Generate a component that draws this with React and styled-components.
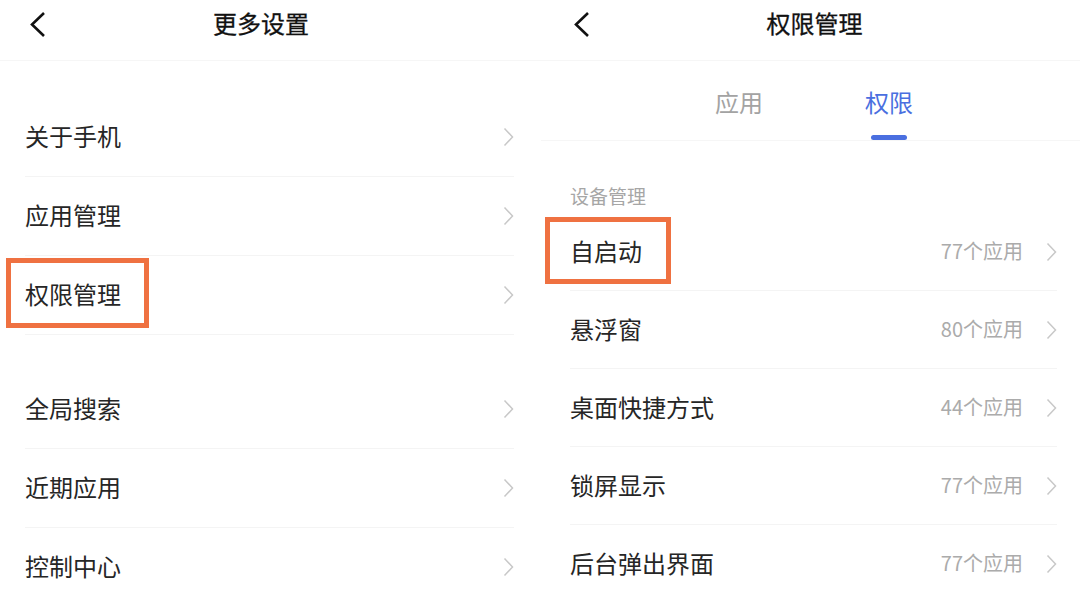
import React from "react";
import styled, {createGlobalStyle} from "styled-components";

const GlobalStyle = createGlobalStyle`
  html, body {
    margin: 0;
    padding: 0;
    background: #fff;
  }
  body {
    font-family: "Noto Sans CJK SC", "Noto Sans", sans-serif;
    color: #1f1f1f;
  }
`;

const Page = styled.div`
  display: grid;
  grid-template-columns: 541px 539px;
  width: 1080px;
  height: 597px;
  overflow: hidden;
  background: #fff;
`;

const Panel = styled.div`
  display: flex;
  flex-direction: column;
  min-width: 0;
`;

const Header = styled.div`
  box-sizing: border-box;
  display: grid;
  grid-template-columns: ${p => p.$left}px 1fr ${p => p.$right}px;
  align-items: start;
  height: 61px;
  padding-top: 9px;
  border-bottom: 1px solid #f6f6f6;
`;

const Back = styled.div`
  display: flex;
  align-items: center;
  height: 28px;
  padding: 1px 0 0 ${p => p.$pad}px;
`;

const Title = styled.div`
  text-align: center;
  font-size: 24px;
  line-height: 28px;
  font-weight: 400;
  color: #111;
  -webkit-text-stroke: 0.3px #111;
`;

const Group = styled.div`
  display: flex;
  flex-direction: column;
  margin-top: ${p => p.$top}px;
`;

const Row = styled.div`
  box-sizing: border-box;
  display: flex;
  align-items: center;
  height: ${p => p.$h}px;
  margin: 0 ${p => p.$right}px 0 ${p => p.$left}px;
  border-bottom: 1px solid #f4f4f4;
`;

const Label = styled.div`
  position: relative;
  align-self: stretch;
  display: flex;
  align-items: center;
  padding-bottom: 3px;
  font-size: 24px;
  color: #262626;
  &::after {
    content: "";
    display: ${p => (p.$mark ? "block" : "none")};
    position: absolute;
    box-sizing: border-box;
    top: ${p => p.$mark?.[0]}px;
    right: ${p => p.$mark?.[1]}px;
    bottom: ${p => p.$mark?.[2]}px;
    left: ${p => p.$mark?.[3]}px;
    border: 5px solid #ef7141;
  }
`;

const Value = styled.span`
  margin-left: auto;
  margin-right: 23px;
  padding-bottom: 2px;
  font-size: 20px;
  color: #ababab;
`;

const Spacer = styled.span`
  margin-left: auto;
`;

const TabBar = styled.div`
  box-sizing: border-box;
  display: flex;
  justify-content: center;
  gap: 102px;
  height: 80px;
  padding: 25px 0 0 7px;
  border-bottom: 1px solid #f6f6f6;
`;

const Tab = styled.div`
  display: flex;
  flex-direction: column;
  align-items: center;
  font-size: 24px;
  line-height: 32px;
  color: ${p => (p.$active ? "#4a6fe0" : "#a3a3a3")};
  &::after {
    content: "";
    width: 36px;
    height: 5px;
    margin-top: 17px;
    border-radius: 3px;
    background: ${p => (p.$active ? "#4a6fe0" : "transparent")};
  }
`;

const Section = styled.div`
  padding: 41px 0 0 29px;
  font-size: 19px;
  line-height: 28px;
  color: #a6a6a6;
`;

const BackIcon = () => (
  <svg width="17" height="27" viewBox="0 0 17 27">
    <polyline points="15,2 3,13.5 15,25" fill="none" stroke="#111" strokeWidth="2.6" strokeLinejoin="miter" />
  </svg>
);

const Chevron = () => (
  <svg width="11" height="20" viewBox="0 0 11 20">
    <polyline points="1.5,1.5 9.5,10 1.5,18.5" fill="none" stroke="#c8c8c8" strokeWidth="1.5" />
  </svg>
);

const moreGroups = [
  [{label: "关于手机"}, {label: "应用管理"}, {label: "权限管理", mark: [2, -28, 6, -19]}],
  [{label: "全局搜索"}, {label: "近期应用"}, {label: "控制中心"}],
];

const perms = [
  {label: "自启动", value: "77个应用", mark: [4, -29, 6, -25]},
  {label: "悬浮窗", value: "80个应用"},
  {label: "桌面快捷方式", value: "44个应用"},
  {label: "锁屏显示", value: "77个应用"},
  {label: "后台弹出界面", value: "77个应用"},
];

const App = () => {
  return (
    <>
      <GlobalStyle/>
      <Page>
        <Panel>
          <Header $left={60} $right={79}>
            <Back $pad={29}><BackIcon/></Back>
            <Title>更多设置</Title>
            <span/>
          </Header>
          {moreGroups.map((group, gi) => (
            <Group key={gi} $top={gi === 0 ? 37 : 35}>
              {group.map(item => (
                <Row key={item.label} $h={79} $left={25} $right={27}>
                  <Label $mark={item.mark}>{item.label}</Label>
                  <Spacer/>
                  <Chevron/>
                </Row>
              ))}
            </Group>
          ))}
        </Panel>

        <Panel>
          <Header $left={70} $right={62}>
            <Back $pad={32}><BackIcon/></Back>
            <Title>权限管理</Title>
            <span/>
          </Header>
          <TabBar>
            <Tab>应用</Tab>
            <Tab $active>权限</Tab>
          </TabBar>
          <Section>设备管理</Section>
          <Group $top={3}>
            {perms.map(item => (
              <Row key={item.label} $h={78} $left={29} $right={23}>
                <Label $mark={item.mark}>{item.label}</Label>
                <Value>{item.value}</Value>
                <Chevron/>
              </Row>
            ))}
          </Group>
        </Panel>
      </Page>
    </>
  );
};

export default App;
